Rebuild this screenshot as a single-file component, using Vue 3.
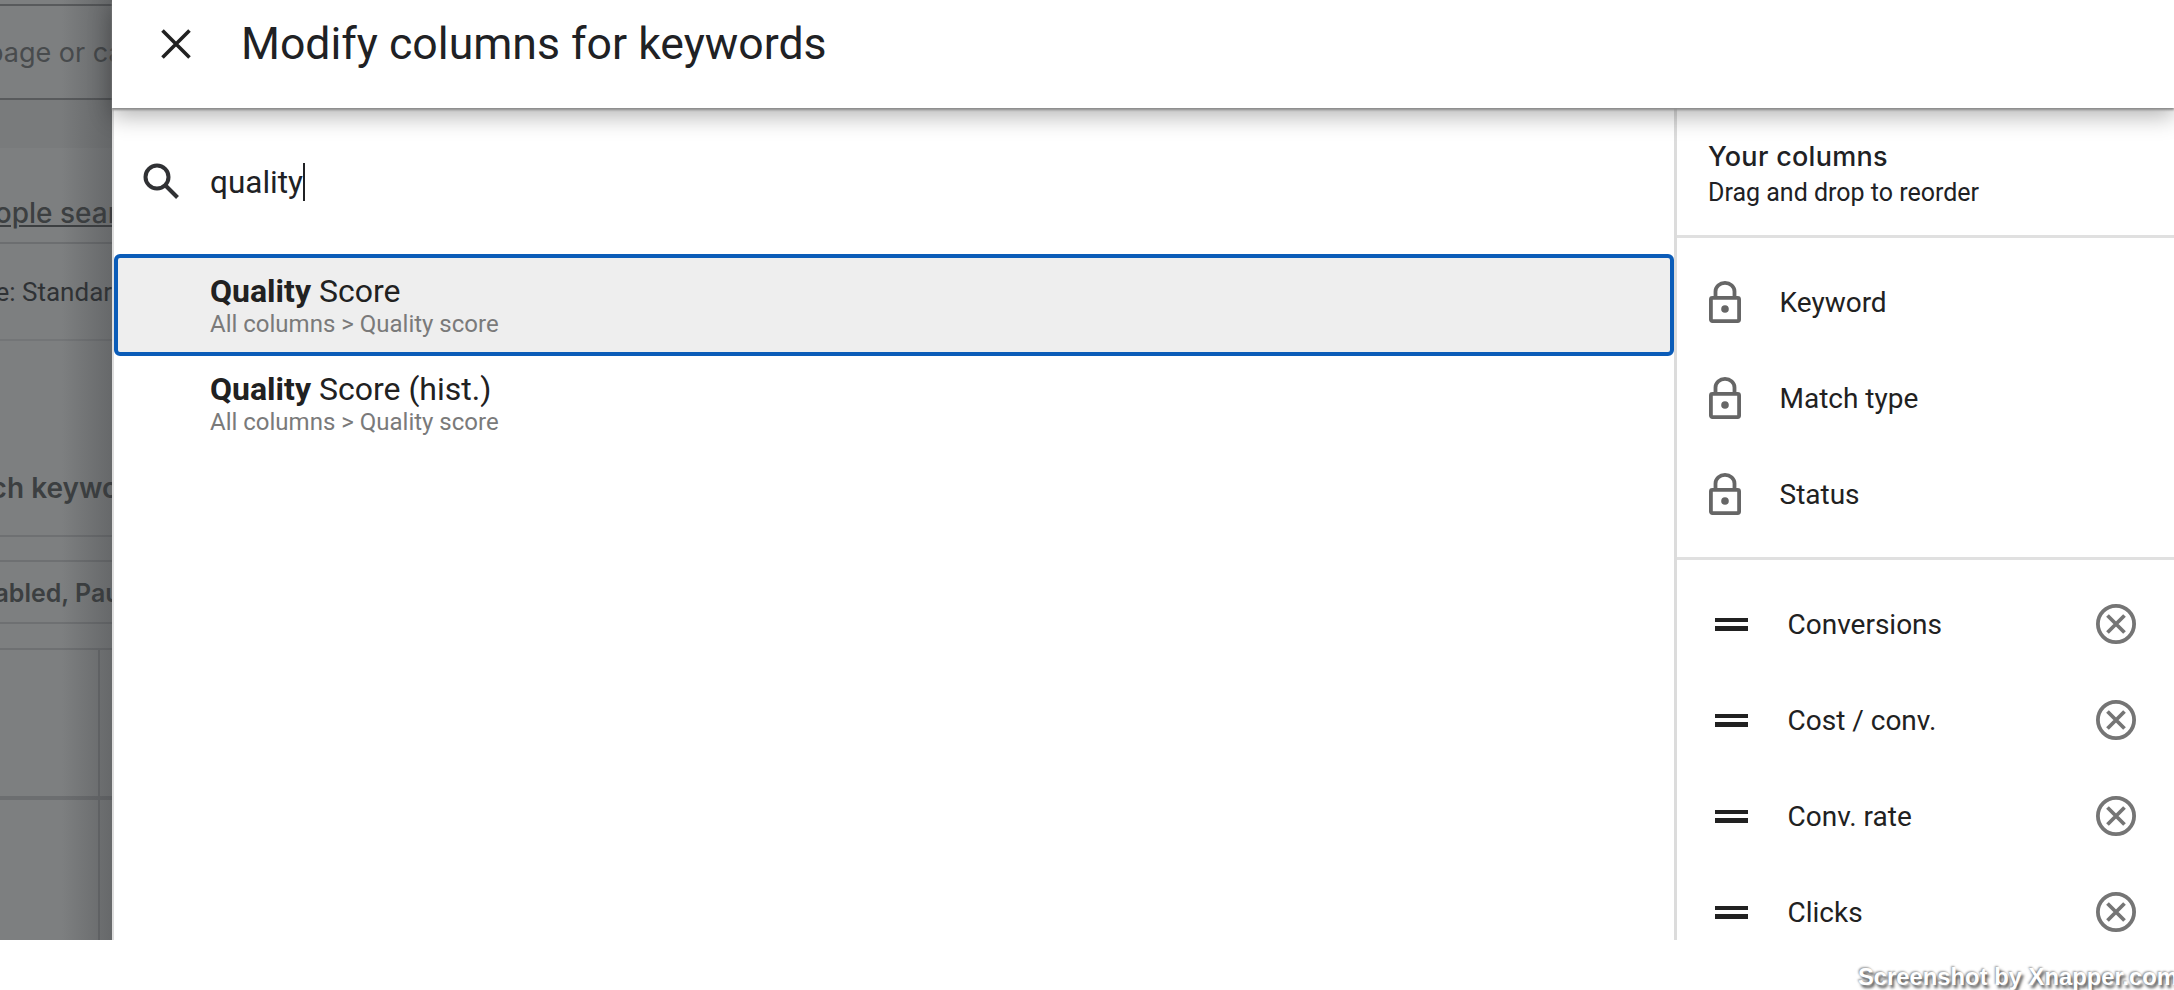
<script setup>
const locked = ['Keyword', 'Match type', 'Status']
const cols = ['Conversions', 'Cost / conv.', 'Conv. rate', 'Clicks']
const results = [
  { rest: ' Score', sel: true },
  { rest: ' Score (hist.)', sel: false }
]
</script>

<template>
  <div class="page">
    <div class="stage">
      <div class="backdrop">
        <div class="bg r1"></div>
        <div class="bg r2"><span class="t t2">page or campaign</span></div>
        <div class="bg r3"></div>
        <div class="bg r4"><span class="t t4">people search</span></div>
        <div class="bg r5"><span class="t t5">Type: Standard</span></div>
        <div class="bg r6"><span class="t t6">Search keywords</span></div>
        <div class="bg r7"></div>
        <div class="bg r8"><span class="t t8">Enabled, Paused</span></div>
        <div class="bg r9"></div>
        <div class="bg r10"><i class="vline"></i></div>
        <div class="bg r11"><i class="vline"></i></div>
      </div>
      <div class="panel">
        <header class="head">
          <svg class="close" viewBox="0 0 32 32" width="32" height="32"><path d="M2.5 2.5 L29.5 29.5 M29.5 2.5 L2.5 29.5" stroke="#212121" stroke-width="3.6" fill="none"/></svg>
          <h1 class="title">Modify columns for keywords</h1>
        </header>
        <div class="body">
          <section class="left">
            <div class="search">
              <svg class="sicon" viewBox="0 0 40 40" width="40" height="40">
                <circle cx="15" cy="15" r="11.5" fill="none" stroke="#303134" stroke-width="4"/>
                <path d="M23.5 23.5 L35.5 35.5" stroke="#303134" stroke-width="4" fill="none"/>
              </svg>
              <span class="query">quality</span><i class="caret"></i>
            </div>
            <div v-for="r in results" :key="r.rest" class="result" :class="{ sel: r.sel }">
              <div class="rname"><b>Quality</b>{{ r.rest }}</div>
              <div class="rpath">All columns &gt; Quality score</div>
            </div>
          </section>
          <aside class="right">
            <div class="rhead">
              <div class="rtitle">Your columns</div>
              <div class="rsub">Drag and drop to reorder</div>
            </div>
            <div class="lockedlist">
              <div v-for="c in locked" :key="c" class="lrow">
                <svg class="lock" viewBox="0 0 32 42" width="32" height="42">
                  <path d="M6.5 17 V10.5 a9.5 8.6 0 0 1 19 0 V17" fill="none" stroke="#666" stroke-width="3.8"/>
                  <rect x="1.9" y="16.9" width="28.2" height="23.2" rx="1.5" fill="none" stroke="#666" stroke-width="3.8"/>
                  <circle cx="16" cy="28" r="3.8" fill="#666"/>
                </svg>
                <span class="ltext">{{ c }}</span>
              </div>
            </div>
            <div class="movelist">
              <div v-for="c in cols" :key="c" class="mrow">
                <span class="drag"><i></i><i></i></span>
                <span class="mtext">{{ c }}</span>
                <svg class="rm" viewBox="0 0 40 40" width="40" height="40">
                  <circle cx="20" cy="20" r="18.1" fill="none" stroke="#757575" stroke-width="3.8"/>
                  <path d="M11.5 11.5 L28.5 28.5 M28.5 11.5 L11.5 28.5" stroke="#757575" stroke-width="3.8" fill="none"/>
                </svg>
              </div>
            </div>
          </aside>
        </div>
      </div>
    </div>
    <footer class="foot"><span class="mark">Screenshot by Xnapper.com</span></footer>
  </div>
</template>

<style>
html, body { margin: 0; background: #fff; }
</style>

<style scoped>
.page { width: 2174px; height: 990px; overflow: hidden; display: flex; flex-direction: column; font-family: Roboto, "Liberation Sans", sans-serif; background: #fff; }
.stage { height: 940px; display: flex; overflow: hidden; }

.backdrop { width: 112px; flex: none; display: flex; flex-direction: column; position: relative; overflow: hidden; background: #7d7f80; }
.backdrop::after { content: ""; position: absolute; inset: 0; background: linear-gradient(to right, rgba(50,52,55,0) 55%, rgba(50,52,55,.3) 100%); }
.bg { display: flex; align-items: center; white-space: nowrap; box-sizing: border-box; position: relative; }
.r1 { height: 6px; border-bottom: 2px solid #585a5c; }
.r2 { height: 94px; border-bottom: 2px solid #585a5c; padding-top: 2px; }
.r3 { height: 48px; background: #797b7c; }
.r4 { height: 96px; border-bottom: 2px solid #6c6e70; padding-top: 36px; }
.r5 { height: 97px; border-bottom: 2px solid #737577; padding-top: 2px; }
.r6 { height: 196px; border-bottom: 2px solid #6e7072; padding-top: 100px; }
.r7 { height: 26px; border-bottom: 2px solid #6e7072; }
.r8 { height: 62px; border-bottom: 2px solid #6e7072; padding-top: 2px; }
.r9 { height: 26px; border-bottom: 2px solid #6e7072; }
.r10 { height: 150px; border-bottom: 4px solid #6c6e70; }
.r11 { height: 140px; }
.vline { width: 2px; height: 100%; background: #6c6e70; margin-left: 98px; }
.t { flex: none; color: #3c3f41; font-family: Inter, Roboto, sans-serif; }
.t2 { font-size: 27px; margin-left: -13px; color: #484b4d; }
.t4 { font-size: 28px; font-weight: 500; margin-left: -39px; text-decoration: underline; }
.t5 { font-size: 26px; margin-left: -46px; color: #2f3235; font-family: Roboto, sans-serif; }
.t6 { font-size: 28px; font-weight: 600; margin-left: -71px; }
.t8 { font-size: 25px; font-weight: 600; margin-left: -36px; }

.panel { flex: 1; min-width: 0; display: flex; flex-direction: column; background: #fff; border-left: 2px solid #ddd; }
.head { height: 108px; flex: none; display: flex; align-items: center; box-sizing: border-box; background: #fff; position: relative; z-index: 2; box-shadow: 0 2px 2px #8c8c8c, 0 8px 22px rgba(0,0,0,.3); margin-left: -2px; padding: 0 0 20px 2px; }
.close { margin-left: 46px; flex: none; }
.title { margin: 0 0 0 49px; font-size: 44.6px; font-weight: 400; color: #202124; letter-spacing: 0; }

.body { flex: 1; display: flex; min-height: 0; }
.left { flex: 1; min-width: 0; }
.search { height: 146px; display: flex; align-items: center; padding-top: 1px; box-sizing: border-box; }
.sicon { margin-left: 28px; flex: none; }
.query { margin: 2px 0 0 28px; font-size: 31.5px; color: #202124; }
.caret { width: 2px; height: 38px; background: #202124; }
.result { height: 98px; box-sizing: border-box; padding: 11px 0 0 92px; border: 4px solid transparent; }
.result.sel { height: 102px; padding-top: 15px; background: #eee; border-color: #0b5cb8; border-radius: 6px; }
.rname { font-size: 32px; line-height: 36px; color: #212121; }
.rname b { font-weight: 700; }
.rpath { font-size: 24px; line-height: 28px; margin-top: 1px; color: #7a7a7a; }

.right { width: 500px; flex: none; box-sizing: border-box; border-left: 3px solid #dcdcdc; }
.rhead { height: 130px; box-sizing: border-box; border-bottom: 3px solid #e0e0e0; padding: 31px 0 0 31px; }
.rtitle { font-size: 27px; line-height: 36px; font-weight: 500; color: #202124; font-family: Inter, Roboto, sans-serif; letter-spacing: 0.3px; }
.rsub { font-size: 25px; line-height: 36px; color: #202124; }
.lockedlist { height: 322px; box-sizing: border-box; border-bottom: 3px solid #e0e0e0; padding-top: 16px; }
.lrow { height: 96px; display: flex; align-items: center; padding-left: 32px; }
.lock { flex: none; }
.ltext { margin-left: 38.5px; font-size: 28px; color: #212121; }
.movelist { padding-top: 16px; }
.mrow { height: 96px; display: flex; align-items: center; padding-left: 38px; }
.drag { width: 33px; flex: none; display: flex; flex-direction: column; gap: 4px; }
.drag i { display: block; height: 4.5px; background: #212121; }
.mtext { margin-left: 39.5px; font-size: 28px; color: #212121; flex: 1; }
.rm { flex: none; margin-right: 38.5px; }

.foot { height: 50px; display: flex; justify-content: flex-end; align-items: flex-end; overflow: hidden; }
.mark { font-size: 23.8px; font-weight: 700; font-family: "Liberation Sans", sans-serif; color: #fff; text-shadow: 2px 3px 3px #555, -1px -1px 2px #999; line-height: 30px; white-space: nowrap; margin: 0 -4px -2px 0; }
</style>
